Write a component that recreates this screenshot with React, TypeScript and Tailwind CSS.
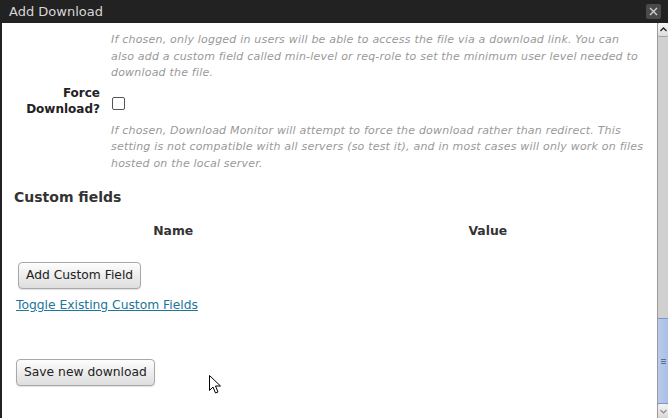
import React from 'react';

const font = { fontFamily: '"DejaVu Sans", Verdana, sans-serif' };

function Scrollbar() {
  return (
    <div className="flex w-[11px] shrink-0 flex-col border-l border-[#9a9a9a] bg-[#d0d0d0]">
      {/* up arrow */}
      <div className="flex h-[14px] items-center justify-center rounded-[2px] border-b border-[#a0a0a0] bg-gradient-to-b from-[#fafafa] to-[#dcdcdc]">
        <svg width="7" height="5" viewBox="0 0 7 5">
          <path d="M0.5 4 L3.5 1 L6.5 4" fill="none" stroke="#222" strokeWidth="1.3" />
        </svg>
      </div>
      <div className="flex-1" />
      {/* thumb */}
      <div className="flex h-[86px] items-center justify-center border-y border-[#7f97c4] bg-gradient-to-r from-[#b8cbec] to-[#a9bfe6]">
        <svg width="5" height="7" viewBox="0 0 5 7">
          <path d="M0 1.5 H5 M0 3.5 H5 M0 5.5 H5" stroke="#5b6f95" strokeWidth="1" />
        </svg>
      </div>
      {/* down arrow */}
      <div className="flex h-[14px] items-center justify-center rounded-[2px] bg-gradient-to-b from-[#f4f4f4] to-[#d8d8d8]">
        <svg width="7" height="5" viewBox="0 0 7 5">
          <path d="M0.5 1 L3.5 4 L6.5 1" fill="none" stroke="#8a8a8a" strokeWidth="1.1" />
        </svg>
      </div>
    </div>
  );
}

function Button({ children, className }: { children: React.ReactNode; className?: string }) {
  return (
    <button
      className={`h-[27px] rounded-[4px] border border-[#a8a8a8] bg-gradient-to-b from-[#fdfdfd] to-[#dedede] px-[7px] text-[12.3px] text-[#222] shadow-[0_1px_1px_rgba(0,0,0,0.12)] ${className ?? ''}`}
    >
      {children}
    </button>
  );
}

export default function App() {
  return (
    <div className="relative flex h-[418px] w-[668px] flex-col overflow-hidden bg-white" style={font}>
      {/* Title bar */}
      <div className="flex h-[23px] shrink-0 items-center justify-between bg-[#222] pl-[9px] pr-[7px]">
        <span className="text-[13px] text-[#d6d6d6]">Add Download</span>
        <div className="flex h-[15px] w-[15px] items-center justify-center rounded-[2px] bg-[#4a4a4a]">
          <svg width="9" height="9" viewBox="0 0 9 9">
            <path d="M1 1 L8 8 M8 1 L1 8" stroke="#d0d0d0" strokeWidth="1.4" />
          </svg>
        </div>
      </div>

      <div className="flex min-h-0 flex-1">
        <div className="min-w-0 flex-1 border-l-2 border-[#222] pt-[9px]">
          {/* Members only description */}
          <div className="flex">
            <div className="w-[98px] shrink-0" />
            <p className="ml-[11px] whitespace-nowrap text-[11px] italic leading-[16.5px] tracking-[0.2px] text-[#999]">
              If chosen, only logged in users will be able to access the file via a download link. You can
              <br />
              also add a custom field called min-level or req-role to set the minimum user level needed to
              <br />
              download the file.
            </p>
          </div>

          {/* Force download row */}
          <div className="mt-[3px] flex">
            <label className="w-[98px] shrink-0 text-right text-[12px] font-bold leading-[16px] text-[#222]">
              Force
              <br />
              Download?
            </label>
            <div className="ml-[11px]">
              <div className="ml-[1px] mt-[12px] h-[13px] w-[13px] rounded-[2px] border border-[#555] bg-white" />
              <p className="mt-[13px] whitespace-nowrap text-[11px] italic leading-[16.5px] tracking-[0.2px] text-[#999]">
                If chosen, Download Monitor will attempt to force the download rather than redirect. This
                <br />
                setting is not compatible with all servers (so test it), and in most cases will only work on files
                <br />
                hosted on the local server.
              </p>
            </div>
          </div>

          {/* Custom fields */}
          <div className="px-[12px]">
            <h3 className="mt-[16px] text-[14px] font-bold leading-[18px] text-[#333]">Custom fields</h3>
            <div className="ml-[2px] mt-[17px] grid grid-cols-2 text-[12.4px] font-bold leading-[16px] text-[#333]">
              <div className="text-center">Name</div>
              <div className="text-center">Value</div>
            </div>
            <Button className="ml-[4px] mt-[23px]">Add Custom Field</Button>
            <div className="mt-[3px]">
              <a href="#" className="ml-[2px] text-[12.3px] leading-[16px] text-[#21759b] underline">
                Toggle Existing Custom Fields
              </a>
            </div>
            <Button className="ml-[2px] mt-[43px]">Save new download</Button>
          </div>
        </div>
        <Scrollbar />
      </div>

      {/* mouse pointer */}
      <svg className="absolute left-[209px] top-[375px]" width="13" height="20" viewBox="0 0 13 20">
        <path
          d="M0.5 0.5 L0.5 15.5 L4 12 L6.5 18 L9 17 L6.5 11 L11.5 11 Z"
          fill="#fff"
          stroke="#000"
          strokeWidth="1"
          strokeLinejoin="miter"
        />
      </svg>
    </div>
  );
}
